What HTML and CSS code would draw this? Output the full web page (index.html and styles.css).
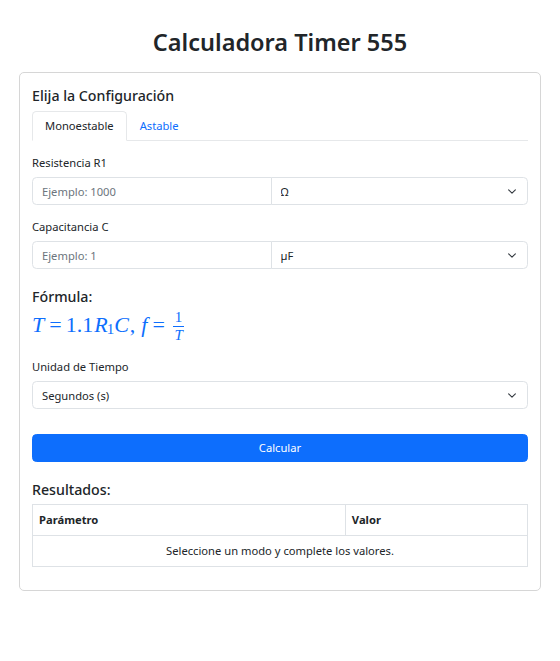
FILE: index.html
```html
<!DOCTYPE html>
<html lang="es">
<head>
<meta charset="utf-8">
<title>Calculadora Timer 555</title>
<link rel="stylesheet" href="styles.css">
</head>
<body>
<div class="page">
  <h1 class="title">Calculadora Timer 555</h1>
  <div class="card">
    <h5 class="card-title">Elija la Configuración</h5>
    <ul class="tabs">
      <li class="tab active">Monoestable</li>
      <li class="tab">Astable</li>
    </ul>

    <div class="field">
      <label class="label">Resistencia R1</label>
      <div class="input-group">
        <input class="control" type="text" placeholder="Ejemplo: 1000">
        <select class="select joined"><option>Ω</option></select>
      </div>
    </div>

    <div class="field">
      <label class="label">Capacitancia C</label>
      <div class="input-group">
        <input class="control" type="text" placeholder="Ejemplo: 1">
        <select class="select joined"><option>µF</option></select>
      </div>
    </div>

    <h5 class="section formula-title">Fórmula:</h5>
    <p class="formula">
      <i class="mi">T</i><span class="rel">=</span><span class="mn">1.1</span><i class="mi">R</i><span class="sub">1</span><i class="mi">C</i><span class="punct">,</span><i class="mi f">f</i><span class="rel">=</span><span class="frac"><span class="num">1</span><span class="den"><i>T</i></span></span>
    </p>

    <div class="field time">
      <label class="label">Unidad de Tiempo</label>
      <select class="select full"><option>Segundos (s)</option></select>
    </div>

    <button class="btn" type="button">Calcular</button>

    <h5 class="section results-title">Resultados:</h5>
    <table class="table">
      <thead>
        <tr><th class="col-param">Parámetro</th><th>Valor</th></tr>
      </thead>
      <tbody>
        <tr><td colspan="2" class="empty">Seleccione un modo y complete los valores.</td></tr>
      </tbody>
    </table>
  </div>
</div>
</body>
</html>
```
FILE: styles.css
```css
* { box-sizing: border-box; }

body {
  margin: 0;
  font-family: "Noto Sans", "Open Sans", sans-serif;
  font-size: 11.2px;
  line-height: 1.5;
  color: #212529;
  background: #fff;
}

.page {
  padding: 0 19px;
}

.title {
  margin: 0 0 14px;
  padding-top: 27px;
  text-align: center;
  font-size: 23.5px;
  font-weight: 600;
  line-height: 31px;
}

.card {
  border: 1px solid #d6d6d6;
  border-radius: 5px;
  padding: 12px;
}

.card-title {
  margin: 2px 0 6px;
  font-size: 14.2px;
  font-weight: 500;
  line-height: 18px;
}

.tabs {
  display: flex;
  margin: 0;
  padding: 0;
  list-style: none;
  border-bottom: 1px solid #e6e8ea;
}

.tab {
  padding: 5px 12px;
  line-height: 18px;
  color: #0d6efd;
  border: 1px solid transparent;
  border-radius: 4.5px 4.5px 0 0;
  margin-bottom: -1px;
}

.tab.active {
  color: #212529;
  border-color: #e6e8ea #e6e8ea #fff;
  background: #fff;
}

.field {
  margin-top: 12px;
}

.label {
  display: block;
  margin-bottom: 6px;
  line-height: 18px;
  padding-top: 1px;
  height: 18px;
}

.input-group {
  display: flex;
}

.control,
.select {
  height: 28px;
  border: 1px solid #dee2e6;
  font-family: inherit;
  font-size: 11.2px;
  color: #212529;
  background-color: #fff;
  padding: 0 9px;
  margin: 0;
  outline: none;
}

.control {
  flex: 0 0 48.3%;
  border-radius: 4.5px 0 0 4.5px;
}

.control::placeholder {
  color: #6c757d;
}

.select {
  -webkit-appearance: none;
  appearance: none;
  background-image: url("data:image/svg+xml,%3csvg xmlns='http://www.w3.org/2000/svg' viewBox='0 0 16 16'%3e%3cpath fill='none' stroke='%23343a40' stroke-linecap='round' stroke-linejoin='round' stroke-width='2' d='m2 5 6 6 6-6'/%3e%3c/svg%3e");
  background-repeat: no-repeat;
  background-position: right 9px center;
  background-size: 12px 9px;
  padding-right: 27px;
}

.select.joined {
  flex: 1 1 auto;
  margin-left: -1px;
  border-radius: 0 4.5px 4.5px 0;
}

.select.full {
  width: 100%;
  border-radius: 4.5px;
}

.section {
  margin: 0;
  font-size: 14.2px;
  font-weight: 500;
  line-height: 18px;
}

.formula-title {
  margin-top: 19px;
}

.formula {
  margin: 4px 0 0;
  height: 30px;
  display: flex;
  align-items: center;
  font-family: "Liberation Serif", "DejaVu Serif", serif;
  font-size: 22px;
  line-height: 1;
  color: #0d6efd;
  white-space: nowrap;
}

.mi {
  font-style: italic;
}

.mi.f {
  margin-left: 6px;
}

.rel {
  margin: 0 4px 0 5px;
}

.mn {
  margin-right: 1px;
}

.punct {
  margin-left: 1px;
}

.sub {
  font-size: 15px;
  position: relative;
  top: 4px;
  margin-left: -1px;
  margin-right: 0;
}

.frac {
  display: inline-flex;
  flex-direction: column;
  align-items: center;
  font-size: 15px;
  line-height: 1;
  margin-left: 4px;
  transform: translateY(1px);
}

.num {
  padding: 0 2px 1px;
  border-bottom: 1px solid #0d6efd;
}

.den {
  padding-top: 1px;
}

.time {
  margin-top: 17px;
}

.btn {
  display: block;
  width: 100%;
  height: 28px;
  margin-top: 25px;
  border: 1px solid #0d6efd;
  border-radius: 4.5px;
  background: #0d6efd;
  color: #fff;
  font-family: inherit;
  font-size: 11.2px;
  line-height: 18px;
  padding: 0;
}

.results-title {
  margin-top: 19px;
  margin-bottom: 5px;
}

.table {
  width: 100%;
  border-collapse: collapse;
  margin-bottom: 11px;
}

.table th,
.table td {
  border: 1px solid #dee2e6;
  padding: 6px;
  line-height: 18px;
  text-align: left;
}

.table th {
  font-weight: 700;
}

.col-param {
  width: 63.2%;
}

.table td.empty {
  text-align: center;
}
```
